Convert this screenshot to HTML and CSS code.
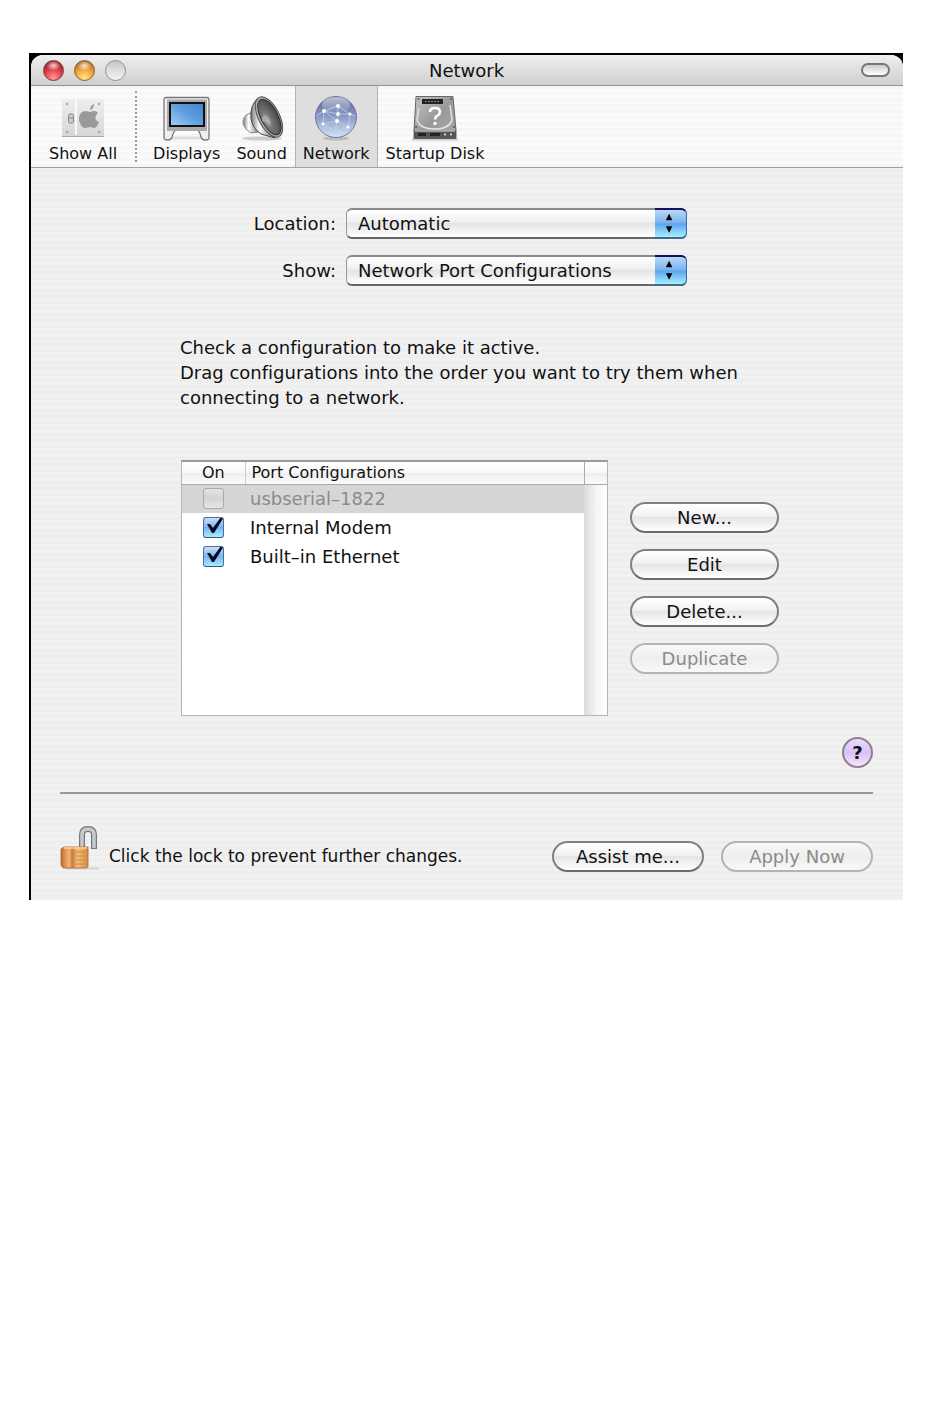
FILE: index.html
```html
<!DOCTYPE html>
<html lang="en">
<head>
<meta charset="utf-8">
<title>Network</title>
<link rel="stylesheet" href="styles.css">
</head>
<body>
<div class="frame">
<div class="window">
  <header class="titlebar">
    <div class="lights">
      <button class="light red" aria-label="Close"></button>
      <button class="light amber" aria-label="Minimize"></button>
      <button class="light clear" aria-label="Zoom"></button>
    </div>
    <h1 class="title">Network</h1>
    <button class="pill" aria-label="Toggle toolbar"></button>
  </header>

  <nav class="toolbar">
    <button class="tool">
      <svg class="tool-icon" width="48" height="46" viewBox="0 0 48 46">
        <defs><linearGradient id="plate" x1="0" y1="0" x2="0" y2="1"><stop offset="0" stop-color="#eee"/><stop offset="1" stop-color="#d6d6d6"/></linearGradient></defs>
        <rect x="3" y="4" width="42" height="38" rx="1" fill="url(#plate)"/>
        <path d="M3 41.500h42" stroke="#aaa"/>
        <path d="M17 5v35" stroke="#fafafa" stroke-width="2"/>
        <g fill="#aaa"><circle cx="8" cy="9" r="1.300"/><circle cx="40" cy="9" r="1.300"/><circle cx="8" cy="37" r="1.300"/><circle cx="40" cy="37" r="1.300"/></g>
        <rect x="9.500" y="19" width="5" height="9" rx="1.500" fill="#ccc" stroke="#888"/><path d="M10 23h4" stroke="#888"/>
        <path d="M31.500 17c2-1 5-2 7.500 1-4 3-3 8 1 9-1 3-3 6-5 6s-2-1-4-1-3 1-5 1c-3 0-6-5-6-9 0-5 3-8 6.500-8 2 0 3 1 5 1zM31 15c0-3 2-5.500 4-6 0 3-2 6-4 6z" fill="#999"/>
      </svg>
      <span>Show All</span>
    </button>
    <span class="divider"></span>
    <button class="tool">
      <svg class="tool-icon" width="48" height="46" viewBox="0 0 48 46">
        <defs>
          <linearGradient id="screen" x1="1" y1="0" x2="0" y2="1"><stop offset="0" stop-color="#4284cf"/><stop offset=".5" stop-color="#5f9fe0"/><stop offset="1" stop-color="#a3cbf4"/></linearGradient>
        </defs>
        <path d="M6 43h36" stroke="#ddd" stroke-width="3"/>
        <path d="M3 2.500h41q2 0 2 3V43q0 2-4 2-3 0-4-3-1-5-3-7H13q-3 2-4 7-1 3-4 3-4 0-4-2V5.500q0-3 2-3z" fill="#efefef" stroke="#777" stroke-width="1.300"/>
        <path d="M4 4.500h40V36H4z" fill="#aaa"/>
        <rect x="6" y="7" width="36" height="25" fill="#111"/>
        <rect x="8" y="9" width="32" height="21" fill="url(#screen)"/>
      </svg>
      <span>Displays</span>
    </button>
    <button class="tool">
      <svg class="tool-icon" width="48" height="46" viewBox="0 0 48 46">
        <defs>
          <radialGradient id="cone" cx=".3" cy=".55" r=".7"><stop offset="0" stop-color="#c8c8c8"/><stop offset=".3" stop-color="#777"/><stop offset="1" stop-color="#444"/></radialGradient>
          <linearGradient id="metal"><stop offset="0" stop-color="#777"/><stop offset=".35" stop-color="#fff"/><stop offset="1" stop-color="#777"/></linearGradient>
        </defs>
        <ellipse cx="24" cy="43.500" rx="20" ry="2" fill="#ccc"/>
        <path d="M8 20l7-3 6 20-8 1q-8-5-8-11 0-4 3-7z" fill="url(#metal)" stroke="#888"/>
        <path d="M19 4q-7 7-6 19 1 10 10 16l14 4z" fill="url(#metal)" stroke="#444"/>
        <ellipse cx="31" cy="22" rx="10.500" ry="22" transform="rotate(-27 31 22)" fill="#aaa" stroke="#555"/>
        <ellipse cx="31.500" cy="22" rx="8.500" ry="19.500" transform="rotate(-27 31.500 22)" fill="url(#cone)" stroke="#333"/>
        <circle cx="27" cy="24" r="3" fill="#aaa"/>
      </svg>
      <span>Sound</span>
    </button>
    <button class="tool selected" aria-pressed="true">
      <svg class="tool-icon" width="48" height="46" viewBox="0 0 48 46">
        <defs>
          <linearGradient id="globe" x1="0" y1="0" x2="0" y2="1"><stop offset="0" stop-color="#59658f"/><stop offset=".45" stop-color="#8594c3"/><stop offset="1" stop-color="#d4e5f7"/></linearGradient>
          <linearGradient id="shine" x1="0" y1="0" x2="0" y2="1"><stop offset="0" stop-color="#fff" stop-opacity=".6"/><stop offset="1" stop-color="#fff" stop-opacity="0"/></linearGradient>
        </defs>
        <ellipse cx="24" cy="43.500" rx="13" ry="2" fill="#bbb"/>
        <circle cx="24" cy="22" r="20.500" fill="url(#globe)" stroke="#6d77a0"/>
        <g fill="none" stroke="#c4d0ec" stroke-width=".8"><path d="M12 16l14-5 12 8-2 13-12 5-13-8 1-13 14 3 12 0M26 11v8l-1 7-13-10M25 26l11 6M25 26l-2 11M4 21l8-5M38 19l5 2M11 29l14-3"/></g>
        <g fill="#fff"><circle cx="12" cy="16" r="2"/><circle cx="26" cy="11" r="2"/><circle cx="26" cy="19" r="2"/><circle cx="38" cy="19" r="1.500"/><circle cx="25" cy="26" r="2"/><circle cx="11" cy="29" r="1.500"/><circle cx="36" cy="32" r="1.500"/></g>
        <ellipse cx="24" cy="10" rx="14" ry="8" fill="url(#shine)"/>
      </svg>
      <span>Network</span>
    </button>
    <button class="tool">
      <svg class="tool-icon" width="48" height="46" viewBox="0 0 48 46">
        <defs><linearGradient id="disk" x1="0" y1="0" x2="1" y2="1"><stop offset="0" stop-color="#c5c5c5"/><stop offset=".5" stop-color="#999"/><stop offset="1" stop-color="#aaa"/></linearGradient></defs>
        <path d="M1 44.500h46" stroke="#ccc" stroke-width="2"/>
        <path d="M5 1.500h37l3 34v8H3v-8z" fill="url(#disk)" stroke="#666"/>
        <path d="M3 35.500h42v8H3z" fill="#555"/><path d="M4 36h40" stroke="#ddd"/>
        <path d="M7 39.500h8M19 39.500h10" stroke="#222" stroke-width="3"/><path d="M33 39.500h2M39 39.500h2" stroke="#ccc" stroke-width="2"/>
        <rect x="11" y="4" width="21" height="5" fill="#222"/><path d="M14 6.500h15" stroke="#888" stroke-dasharray="2 1"/>
        <path d="M8 13L6 25q3 9 18 9 14 0 17-9l-2-15" fill="none" stroke="#e4e4e4" stroke-width="1.500"/>
        <g fill="#555"><circle cx="7.500" cy="4" r="1"/><circle cx="40" cy="4" r="1"/><circle cx="5" cy="32" r="1"/><circle cx="43" cy="32" r="1"/></g>
        <path d="M19 17q0-4 5-4t5 4q0 2-3 4-2 1-2 3.500" fill="none" stroke="#fff" stroke-width="2.600"/><circle cx="24" cy="28.500" r="1.700" fill="#fff"/>
      </svg>
      <span>Startup Disk</span>
    </button>
  </nav>

  <main class="content">
    <div class="settings">
      <form class="form">
        <label for="location">Location:</label>
        <div class="popup">
          <select id="location"><option>Automatic</option></select>
          <svg class="arrows" width="32" height="29" viewBox="0 0 32 29"><path d="M11 11l3.500-7L18 11zM11 17.500l3.500 7 3.500-7z"/></svg>
        </div>
        <label for="show">Show:</label>
        <div class="popup">
          <select id="show"><option>Network Port Configurations</option></select>
          <svg class="arrows" width="32" height="29" viewBox="0 0 32 29"><path d="M11 11l3.500-7L18 11zM11 17.500l3.500 7 3.500-7z"/></svg>
        </div>
      </form>

      <p class="hint">Check a configuration to make it active.<br>Drag configurations into the order you want to try them when connecting to a network.</p>

      <div class="ports">
        <div class="list">
          <table class="table">
            <thead><tr><th class="on" scope="col">On</th><th scope="col">Port Configurations</th></tr></thead>
            <tbody>
              <tr class="off"><td class="on"><input class="check" type="checkbox" id="p1" disabled></td><td><label for="p1">usbserial–1822</label></td></tr>
              <tr><td class="on"><input class="check" type="checkbox" id="p2" checked></td><td><label for="p2">Internal Modem</label></td></tr>
              <tr><td class="on"><input class="check" type="checkbox" id="p3" checked></td><td><label for="p3">Built–in Ethernet</label></td></tr>
            </tbody>
          </table>
          <div class="scroll"></div>
        </div>
        <div class="actions">
          <button class="btn">New...</button>
          <button class="btn">Edit</button>
          <button class="btn">Delete...</button>
          <button class="btn" disabled>Duplicate</button>
        </div>
      </div>
    </div>

    <div class="help-row"><button class="help" aria-label="Help">?</button></div>

    <footer class="footer">
      <button class="lock" aria-label="Lock">
        <svg width="40" height="46" viewBox="0 0 40 46">
          <defs>
            <linearGradient id="brass"><stop offset="0" stop-color="#b06a35"/><stop offset=".12" stop-color="#d98a4c"/><stop offset=".3" stop-color="#f3b476"/><stop offset=".42" stop-color="#c9783c"/><stop offset=".6" stop-color="#f5bf7c"/><stop offset="1" stop-color="#d98b45"/></linearGradient>
          </defs>
          <path d="M6 42.500h33" stroke="#d4d4d4" stroke-width="2"/>
          <path d="M22 22V9q0-6 6-6t6 6v14" fill="none" stroke="#777" stroke-width="6"/>
          <path d="M22 22V9q0-6 6-6t6 6v13" fill="none" stroke="#c6cacc" stroke-width="3.500"/>
          <path d="M1 23l3-2h24v20l-2 1H3l-2-3z" fill="url(#brass)" stroke="#a9662f" stroke-width=".8"/>
          <path d="M12 26h15M12 30h15M12 34h15M12 38h15" stroke="#d58c43"/>
          <path d="M4 22h23" stroke="#fbd5a5" stroke-width="1.500"/>
        </svg>
      </button>
      <span class="lock-text">Click the lock to prevent further changes.</span>
      <button class="btn">Assist me...</button>
      <button class="btn" disabled>Apply Now</button>
    </footer>
  </main>
</div>
</div>
</body>
</html>
```
FILE: styles.css
```css
* { box-sizing: border-box; }

body {
  margin: 0;
  padding: 53px 47px 0 29px;
  background: #fff;
  color: #111;
  font: 18px/25px "DejaVu Sans", "Noto Sans", sans-serif;
  font-variant-ligatures: none;
}

button, select, input { margin: 0; font: inherit; font-variant-ligatures: none; color: inherit; }
button { padding: 0; border: 0; background: none; }

.frame { background: #000; padding: 2px 0 0 2px; }

.window {
  border-radius: 12px 12px 0 0;
  overflow: hidden;
  background: repeating-linear-gradient(#eee 0 3px, #f1f1f1 3px 6px);
}

.titlebar {
  display: grid;
  grid-template-columns: 1fr auto 1fr;
  align-items: center;
  height: 31px;
  padding: 0 13px 0 12px;
  background: linear-gradient(#efefef, #cfcfcf);
  border-bottom: 1px solid #929292;
}
.title { margin: 0; font-size: 18px; font-weight: 400; }
.lights { display: flex; gap: 10px; }
.light {
  width: 21px;
  height: 21px;
  border: 1px solid #777;
  border-radius: 50%;
}
.red {
  border-color: #7a3a3a;
  background: radial-gradient(7px 5px at 50% 24%, #fffc, #fff0), radial-gradient(circle at 50% 90%, #ff9a94, #dc3a42 50%, #7a1a22);
}
.amber {
  border-color: #89602f;
  background: radial-gradient(7px 5px at 50% 24%, #fffc, #fff0), radial-gradient(circle at 50% 90%, #ffe58a, #f0a038 50%, #8a4c1c);
}
.clear { border-color: #929292; background: linear-gradient(#c6c6c6, #dedede 50%, #f4f4f4); }
.pill {
  justify-self: end;
  width: 29px;
  height: 14px;
  border: 2px solid #777;
  border-radius: 7px;
  background: linear-gradient(#ccc, #fff);
}

.toolbar {
  display: flex;
  height: 82px;
  padding-left: 10px;
  background: repeating-linear-gradient(#f6f6f6 0 3px, #fbfbfb 3px 6px);
  border-bottom: 1px solid #a0a0a0;
}
.tool {
  display: flex;
  flex-direction: column;
  align-items: center;
  gap: 2px;
  padding: 9px 7px 0;
  border: solid transparent;
  border-width: 0 1px;
  font-size: 16px;
  line-height: 22px;
}
.tool-icon { display: block; flex: none; }
.selected { background: #dedede; border-color: #b4b4b4; }
.divider { margin: 5px 8px 5px 10px; border-left: 2px dotted #999; }

.content { padding: 40px 30px 28px 29px; }
.settings { padding: 0 94px 0 120px; }

.form {
  display: grid;
  grid-template-columns: 156px 1fr;
  gap: 16px 10px;
  align-items: center;
  padding-right: 92px;
  text-align: right;
}
.popup { position: relative; height: 31px; }
.popup select {
  appearance: none;
  width: 100%;
  height: 31px;
  padding: 0 40px 0 11px;
  border: 1px solid #999;
  border-top: 2px solid #8a8a8a;
  border-bottom: 2px solid #666;
  border-radius: 6px;
  background: linear-gradient(#fff, #efefef 45%, #e4e4e4 50%, #fff);
}
.arrows {
  position: absolute;
  top: 0;
  right: 0;
  height: 31px;
  border-top: 2px solid #14105a;
  border-right: 1px solid #3b6ea8;
  border-bottom: 2px solid #406a86;
  border-radius: 0 6px 6px 0;
  background: linear-gradient(#bcd8f6, #7db5f0 45%, #5ea4ee 52%, #a5f0ff);
}

.hint { margin: 49px 0 50px; }

.ports { display: flex; gap: 22px; }
.list {
  display: flex;
  flex: 1;
  min-height: 256px;
  margin-left: 1px;
  border: 1px solid #b5b5b5;
  border-top: 2px solid #999;
  background: #fff;
  align-items: stretch;
}
.table { flex: 1; align-self: flex-start; border-collapse: collapse; }
.table th {
  height: 22px;
  padding: 0 6px;
  border-bottom: 1px solid #aaa;
  background: linear-gradient(#fff, #f7f7f7 50%, #eee 52%, #fbfbfb);
  font-size: 16px;
  font-weight: 400;
  line-height: 21px;
  text-align: left;
}
.table th + th { border-left: 1px solid #ccc; }
.table td { height: 29px; padding: 0 5px; line-height: 25px; }
.table .on { width: 63px; padding: 0; text-align: center; }
.off { background: #d6d6d6; color: #8b8b8b; }
.scroll {
  width: 23px;
  background:
    linear-gradient(#aaa, #aaa) 0 22px / 100% 1px no-repeat,
    linear-gradient(#aaa, #aaa) 0 0 / 1px 22px no-repeat,
    linear-gradient(#fff, #f7f7f7 50%, #eee 52%, #fbfbfb) 0 0 / 100% 22px no-repeat,
    linear-gradient(90deg, #dadada, #f4f4f4 50%, #fff);
}

.check {
  appearance: none;
  display: block;
  width: 21px;
  height: 21px;
  margin: 0 auto;
  border: 1px solid #4a6f9c;
  border-bottom-color: #2c5a80;
  border-radius: 3px;
  background: linear-gradient(#c8e0fa, #7ab4f0 50%, #a9ecff);
}
.check:checked {
  background:
    url("data:image/svg+xml,%3Csvg xmlns='http://www.w3.org/2000/svg' viewBox='0 0 21 21'%3E%3Cpath d='M4 7h3l3 4L18 0h3L11 16H9z' fill='%23050a20'/%3E%3C/svg%3E") center / 100% no-repeat border-box,
    linear-gradient(#c8e0fa, #7ab4f0 50%, #a9ecff);
}
.check:disabled { border-color: #aaa; background: linear-gradient(#e2e2e2, #d4d4d4 50%, #e6e6e6); }

.actions { display: flex; flex-direction: column; gap: 16px; padding-top: 42px; }
.btn {
  min-width: 149px;
  height: 31px;
  border: 2px solid #808080;
  border-bottom-color: #6c6c6c;
  border-radius: 16px;
  background: linear-gradient(#fff, #f2f2f2 45%, #e5e5e5 50%, #fff);
  line-height: 24px;
}
.btn:disabled { border-color: #b4b4b4; color: #8b8b8b; background: linear-gradient(#f8f8f8, #eee 50%, #f8f8f8); }

.help-row {
  display: flex;
  justify-content: flex-end;
  padding: 21px 0 24px;
  border-bottom: 2px solid #999;
}
.help {
  width: 31px;
  height: 31px;
  border: 2px solid #8a8290;
  border-radius: 50%;
  background: linear-gradient(#ecdcff, #d8c0f6 50%, #f6e4ff);
  font-weight: 700;
  line-height: 26px;
}

.footer { display: flex; align-items: flex-end; gap: 17px; padding-top: 32px; }
.footer .btn { min-width: 152px; }
.lock { height: 46px; }
.lock svg { display: block; }
.lock-text { flex: 1; margin-left: -8px; font-size: 17px; line-height: 31px; }
```
